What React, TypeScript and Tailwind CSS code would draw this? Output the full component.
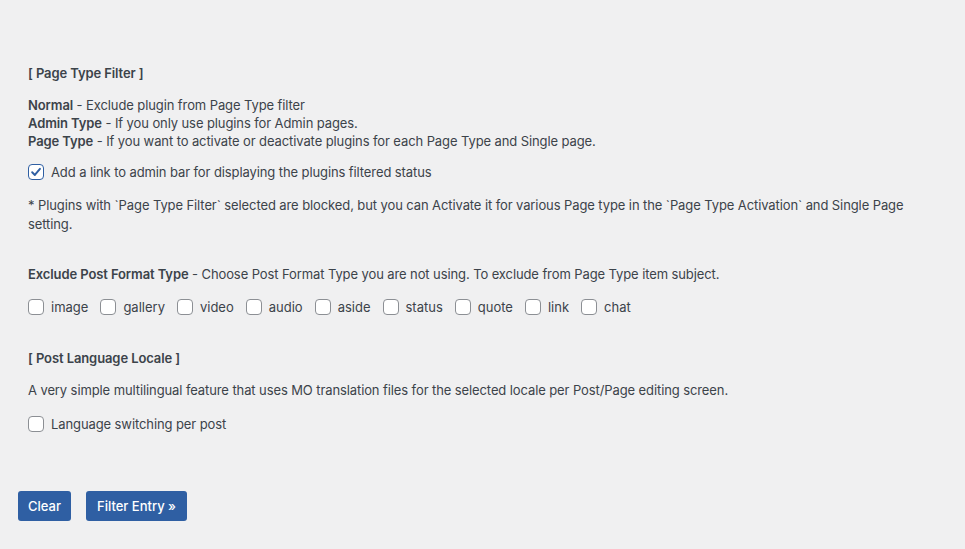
import React from "react";

type BoxProps = {
  checked?: boolean;
};

const Box = ({ checked }: BoxProps) => {
  return (
    <span
      className={`flex h-4 w-4 shrink-0 items-center justify-center rounded-[4px] bg-white ${
        checked ? "border-[1.5px] border-[#2f5fa3]" : "border border-[#8c8f94]"
      }`}
    >
      {checked && (
        <svg viewBox="0 0 16 16" className="h-[14px] w-[14px]" fill="none">
          <path
            d="M3.6 8.3 L6.7 11.4 L12.5 4.4"
            stroke="#2f5fa3"
            strokeWidth="2.2"
            strokeLinecap="round"
            strokeLinejoin="round"
          />
        </svg>
      )}
    </span>
  );
};

const formats = ["image", "gallery", "video", "audio", "aside", "status", "quote", "link", "chat"];

export default function App() {
  return (
    <div
      className="min-h-[549px] w-full bg-[#f0f0f1] text-[13px] leading-[18px] text-[#3c434a]"
      style={{ fontFamily: "Inter, 'Liberation Sans', sans-serif" }}
    >
      <div className="pl-[28px] pr-[20px] pt-[64px] tracking-[-0.1px]">
        {/* page type filter */}
        <div className="font-semibold">[ Page Type Filter ]</div>
        <div className="mt-[14px]">
          <div>
            <span className="font-semibold">Normal</span> - Exclude plugin from Page Type filter
          </div>
          <div>
            <span className="font-semibold">Admin Type</span> - If you only use plugins for Admin pages.
          </div>
          <div>
            <span className="font-semibold">Page Type</span> - If you want to activate or deactivate plugins for each Page Type and Single page.
          </div>
        </div>
        <label className="mt-[13px] flex items-center gap-[7px]">
          <Box checked />
          <span>Add a link to admin bar for displaying the plugins filtered status</span>
        </label>
        <p className="mt-[15px] max-w-[900px] leading-[19px]">
          * Plugins with `Page Type Filter` selected are blocked, but you can Activate it for various Page type in the `Page Type Activation` and Single Page setting.
        </p>

        {/* post format */}
        <div className="mt-[31px]">
          <span className="font-semibold">Exclude Post Format Type</span> - Choose Post Format Type you are not using. To exclude from Page Type item subject.
        </div>
        <div className="mt-[15px] flex items-center gap-[12px] tracking-normal">
          {formats.map((f) => (
            <label key={f} className="flex items-center gap-[7px]">
              <Box />
              <span>{f}</span>
            </label>
          ))}
        </div>

        {/* locale */}
        <div className="mt-[33px] font-semibold">[ Post Language Locale ]</div>
        <p className="mt-[14px]">
          A very simple multilingual feature that uses MO translation files for the selected locale per Post/Page editing screen.
        </p>
        <label className="mt-[16px] flex items-center gap-[7px]">
          <Box />
          <span>Language switching per post</span>
        </label>
      </div>

      <div className="mt-[58px] flex gap-[15px] pl-[18px]">
        <button className="h-[30px] rounded-[3px] bg-[#2f5fa3] px-[10px] font-medium text-white">Clear</button>
        <button className="h-[30px] rounded-[3px] bg-[#2f5fa3] px-[11px] font-medium text-white">Filter Entry »</button>
      </div>
    </div>
  );
}
